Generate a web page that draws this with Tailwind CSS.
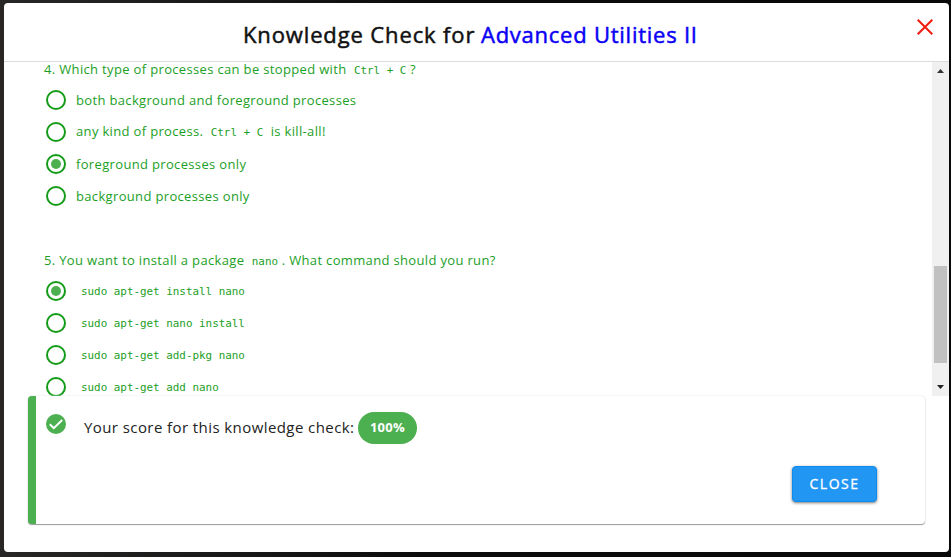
<!DOCTYPE html>
<html lang="en">
<head>
<meta charset="utf-8">
<title>Knowledge Check</title>
<script src="https://cdn.jsdelivr.net/npm/@tailwindcss/browser@4"></script>
</head>
<body class="h-[557px] w-[951px] overflow-hidden bg-[#080808] bg-[linear-gradient(90deg,#282726_0%,#0b0b0b_45%,#080808_100%)] pt-[3px] pl-1 font-['Open_Sans',sans-serif]">
<main class="flex h-[549px] w-[945px] flex-col overflow-hidden rounded bg-white">
  <header class="flex h-[59px] shrink-0 justify-between border-b border-[#dcdcdc] pl-[239px] pr-4">
    <h1 class="pt-[15px] text-[22px] leading-8 whitespace-nowrap text-[#111] [-webkit-text-stroke:0.5px]"><span class="inline-block w-[238px] tracking-[0.87px]">Knowledge Check for</span><span class="tracking-[0.75px] text-[#0b00f5]">Advanced Utilities II</span></h1>
    <svg class="mt-4 size-4" viewBox="0 0 16 16" fill="none" stroke="#f01c0c" stroke-width="2"><path d="M.7.7l14.6 14.6M15.3.7L.7 15.3"/></svg>
  </header>
  <section class="flex h-[334px] shrink-0 text-[13px] tracking-[0.34px] text-[#1ca01f]">
    <div class="w-[928px] pl-10">
      <div class="h-[22px] leading-[15px] whitespace-pre">4. Which type of processes can be stopped with  <code class="font-['DejaVu_Sans_Mono',monospace] text-[10.9px] tracking-normal">Ctrl + C</code> ?</div>
      <ul>
        <li class="flex h-8 items-center gap-[10px] pl-[2px] whitespace-pre"><i class="size-5 rounded-full border-2 border-[#149c18]"></i><span class="pt-px">both background and foreground processes</span></li>
        <li class="flex h-8 items-center gap-[10px] pl-[2px] whitespace-pre"><i class="size-5 rounded-full border-2 border-[#149c18]"></i><span>any kind of process.  <code class="font-['DejaVu_Sans_Mono',monospace] text-[10.9px] tracking-normal">Ctrl + C</code>  is kill-all!</span></li>
        <li class="flex h-8 items-center gap-[10px] pl-[2px] whitespace-pre"><i class="flex size-5 items-center justify-center rounded-full border-2 border-[#149c18]"><b class="size-[10px] rounded-full bg-[#4caf50]"></b></i><span class="pt-px">foreground processes only</span></li>
        <li class="flex h-8 items-center gap-[10px] pl-[2px] whitespace-pre"><i class="size-5 rounded-full border-2 border-[#149c18]"></i><span class="pt-px">background processes only</span></li>
      </ul>
      <div class="mt-9 h-[27px] leading-[24px] whitespace-pre">5. You want to install a package  <code class="font-['DejaVu_Sans_Mono',monospace] text-[10.9px] tracking-normal">nano</code> . What command should you run?</div>
      <ul class="text-[10.9px] tracking-normal">
        <li class="flex h-8 items-center gap-[15px] pl-[2px]"><i class="flex size-5 items-center justify-center rounded-full border-2 border-[#149c18]"><b class="size-[10px] rounded-full bg-[#4caf50]"></b></i><code class="pt-[2px] font-['DejaVu_Sans_Mono',monospace] text-[10.9px]">sudo apt-get install nano</code></li>
        <li class="flex h-8 items-center gap-[15px] pl-[2px]"><i class="size-5 rounded-full border-2 border-[#149c18]"></i><code class="pt-[2px] font-['DejaVu_Sans_Mono',monospace] text-[10.9px]">sudo apt-get nano install</code></li>
        <li class="flex h-8 items-center gap-[15px] pl-[2px]"><i class="size-5 rounded-full border-2 border-[#149c18]"></i><code class="pt-[2px] font-['DejaVu_Sans_Mono',monospace] text-[10.9px]">sudo apt-get add-pkg nano</code></li>
        <li class="flex h-8 items-center gap-[15px] pl-[2px]"><i class="size-5 rounded-full border-2 border-[#149c18]"></i><code class="pt-[2px] font-['DejaVu_Sans_Mono',monospace] text-[10.9px]">sudo apt-get add nano</code></li>
      </ul>
    </div>
    <div class="flex w-[17px] flex-col items-center bg-[#f0f0f0]">
      <svg class="mt-[7px] h-1 w-[7px] shrink-0" viewBox="0 0 7 4"><path d="M0 4h7L3.5 0z" fill="#333"/></svg>
      <div class="mt-[193px] h-[97px] w-[13px] shrink-0 bg-[#c1c1c1]"></div>
      <svg class="mt-[22px] h-1 w-[7px] shrink-0" viewBox="0 0 7 4"><path d="M0 0h7L3.5 4z" fill="#222"/></svg>
    </div>
  </section>
  <section class="relative z-10 ml-6 flex h-32 w-[897px] shrink-0 flex-col justify-between rounded border-l-8 border-[#4caf50] bg-white shadow-[0_1px_1px_#999,0_0_2px_#ddd]">
    <div class="flex h-16 items-center pl-[10px] text-[15px] tracking-[0.42px] whitespace-nowrap text-[#222]">
      <svg class="-mt-2 mr-[18px] size-5" viewBox="0 0 20 20"><circle cx="10" cy="10" r="10" fill="#4caf50"/><path d="M3.8 10.2l4 4L16.2 6" fill="none" stroke="#fff" stroke-width="2"/></svg>
      <span class="w-[274px] pb-[2px]">Your score for this knowledge check:</span>
      <span class="flex h-8 w-[59px] items-center justify-center rounded-full bg-[#4caf50] text-[13px] font-bold tracking-[0.3px] text-white">100%</span>
    </div>
    <button class="mr-12 mb-[22px] h-9 w-[85px] self-end rounded border border-[#0c8cf0] bg-[#2196f3] text-sm font-medium tracking-[1.5px] text-white shadow-[0_1px_3px_#777] [-webkit-text-stroke:0.3px]">CLOSE</button>
  </section>
</main>
</body>
</html>
